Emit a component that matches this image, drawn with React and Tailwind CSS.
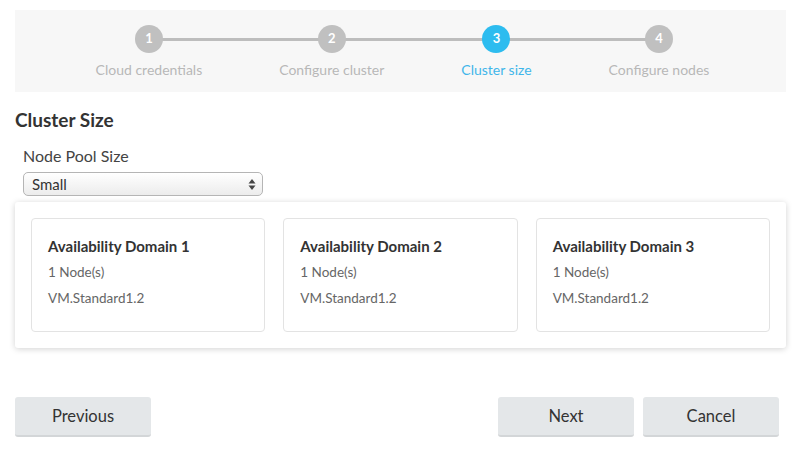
import React from 'react';

const steps = [
  { n: 1, label: 'Cloud credentials' },
  { n: 2, label: 'Configure cluster' },
  { n: 3, label: 'Cluster size', active: true },
  { n: 4, label: 'Configure nodes' },
];

const domains = [1, 2, 3];

export default function App() {
  return (
    <div className="w-[801px] h-[457px] bg-white px-[15px] pt-[10px] font-['Lato','Open_Sans',sans-serif] text-[#333]">
      {/* stepper */}
      <div className="h-[82px] bg-[#f7f7f7] flex justify-center pt-[15px]">
        <div className="relative flex gap-[77px] items-start ml-[4px]">
          <div className="absolute left-[52px] right-[50px] top-[13px] h-[3px] bg-[#bdbdbd]" />
          {steps.map(s => (
            <div key={s.n} className="relative flex flex-col items-center">
              <div className={`w-[28px] h-[28px] rounded-full flex items-center justify-center text-white text-[13px] font-bold ${s.active ? 'bg-[#2dbcef]' : 'bg-[#c0c0c0]'}`}>
                {s.n}
              </div>
              <span className={`mt-[9px] text-[14px] leading-[16px] whitespace-nowrap ${s.active ? 'text-[#3fb6ea]' : 'text-[#b8b8b8]'}`}>
                {s.label}
              </span>
            </div>
          ))}
        </div>
      </div>

      <h2 className="mt-[17px] text-[19px] leading-[22px] font-bold text-[#333]">Cluster Size</h2>

      <div className="ml-[8px] mt-[16px]">
        <div className="text-[16px] leading-[18px] text-[#444]">Node Pool Size</div>
        <div className="mt-[7px] w-[240px] h-[24px] rounded-[5px] border border-[#b5b5b5] bg-gradient-to-b from-white to-[#ececec] flex items-center justify-between pl-[8px] pr-[6px]">
          <span className="text-[15px] text-[#333]">Small</span>
          <svg width="8" height="13" viewBox="0 0 8 13">
            <path d="M4 1 L7.5 5.5 L0.5 5.5 Z" fill="#444" />
            <path d="M4 12 L7.5 7.5 L0.5 7.5 Z" fill="#444" />
          </svg>
        </div>
      </div>

      <div className="mt-[6px] bg-white rounded-[3px] shadow-[0_1px_6px_rgba(0,0,0,0.18)] p-[16px] flex gap-[18px]">
        {domains.map(d => (
          <div key={d} className="w-[235px] h-[114px] border border-[#e3e3e3] rounded-[4px] pl-[16px] pt-[18px]">
            <div className="text-[15px] leading-[18px] font-bold text-[#333]">Availability Domain {d}</div>
            <div className="mt-[9px] text-[13.5px] leading-[17px] text-[#666]">1 Node(s)</div>
            <div className="mt-[9px] text-[13.5px] leading-[17px] text-[#666]">VM.Standard1.2</div>
          </div>
        ))}
      </div>

      <div className="mt-[49px] flex justify-between mr-[7px]">
        <button className="w-[136px] h-[40px] rounded-[3px] bg-[#e4e7e9] border-b-2 border-[#d3d6d8] text-[16.5px] text-[#333]">Previous</button>
        <div className="flex gap-[9px]">
          <button className="w-[136px] h-[40px] rounded-[3px] bg-[#e4e7e9] border-b-2 border-[#d3d6d8] text-[16.5px] text-[#333]">Next</button>
          <button className="w-[136px] h-[40px] rounded-[3px] bg-[#e4e7e9] border-b-2 border-[#d3d6d8] text-[16.5px] text-[#333]">Cancel</button>
        </div>
      </div>
    </div>
  );
}
